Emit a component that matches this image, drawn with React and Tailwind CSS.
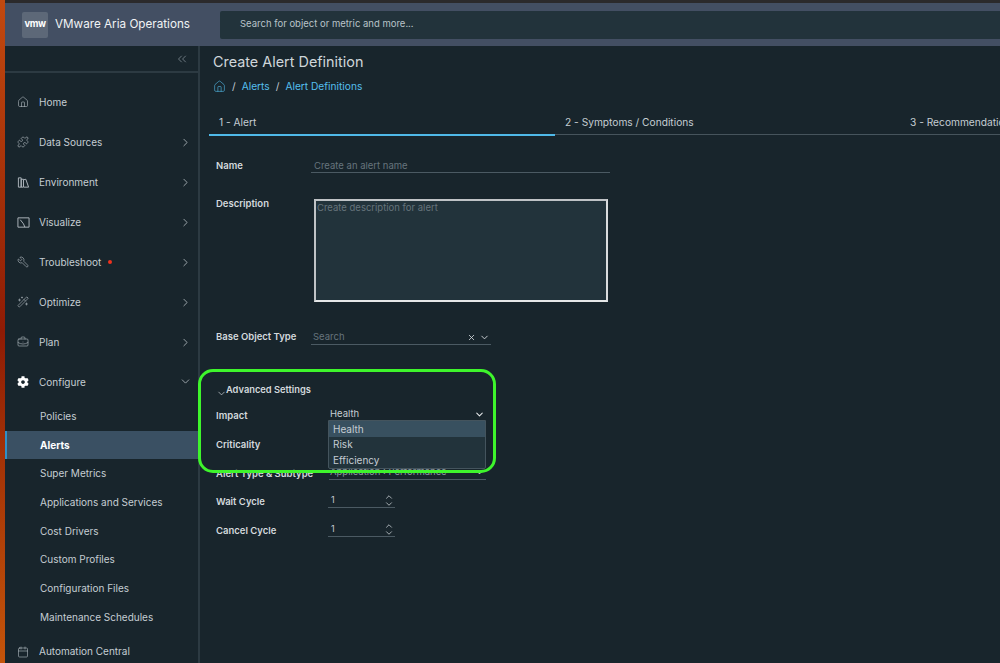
import React from 'react';
import { House, Puzzle, Wrench, WandSparkles, BriefcaseBusiness, Calendar, ChevronRight, ChevronDown, ChevronsLeft, ChevronUp, X } from 'lucide-react';
import { FaCog } from 'react-icons/fa';

const Books = () => (
  <svg width="13" height="13" viewBox="0 0 14 14" fill="none" stroke="currentColor" strokeWidth="1">
    <path d="M1.5 2h3v10h-3zM4.500 3.500h2.500v8.500h-2.500zM7.500 4l2-.5 3 8.500-5 0" />
  </svg>
);

const Chart = () => (
  <svg width="13" height="13" viewBox="0 0 14 14" fill="none" stroke="currentColor" strokeWidth="1">
    <path d="M1 2h12v10H1zM3.500 4l3.500 4.500 1.500 3.500" />
  </svg>
);

const navTop = [
  { label: 'Home', icon: <House size={12} strokeWidth={1.2} /> },
  { label: 'Data Sources', icon: <Puzzle size={12} strokeWidth={1.2} />, arrow: true },
  { label: 'Environment', icon: <Books />, arrow: true },
  { label: 'Visualize', icon: <Chart />, arrow: true },
  { label: 'Troubleshoot', icon: <Wrench size={12} strokeWidth={1.2} className="-scale-x-100" />, arrow: true, dot: true },
  { label: 'Optimize', icon: <WandSparkles size={12} strokeWidth={1.2} />, arrow: true },
  { label: 'Plan', icon: <BriefcaseBusiness size={12} strokeWidth={1.2} />, arrow: true },
];

const subItems = ['Policies', 'Alerts', 'Super Metrics', 'Applications and Services', 'Cost Drivers', 'Custom Profiles', 'Configuration Files', 'Maintenance Schedules'];

const NavRow = ({ item }) => (
  <div className="h-10 flex items-center pl-[12px] pr-[6px] text-[10px] text-[#c5cdd3]">
    <span className="w-[22px] flex justify-start text-[#b4bcc2]">{item.icon}</span>
    <span>{item.label}</span>
    {item.dot && <span className="ml-[7px] w-[4px] h-[4px] rounded-full bg-[#f0321e]"></span>}
    {item.arrow && <ChevronRight size={13} strokeWidth={1.5} className="ml-auto text-[#b4bcc2]" />}
  </div>
);

const Field = ({ label, className, children }) => (
  <div className={'flex items-center ' + className}>
    <div className="w-[112px] shrink-0 text-[9.500px] font-semibold text-[#d3d9dd]">{label}</div>
    {children}
  </div>
);

const Spinner = () => (
  <div className="-mt-[3px] w-[67px] h-[14px] border-b border-[#4b5a63] flex items-center justify-between pl-[3px] pr-[1px] text-[9px] text-[#c5cdd3]">
    <span>1</span>
    <span className="flex flex-col items-center text-[#d3d9dd] -space-y-[3px]">
      <ChevronUp size={10} strokeWidth={1.8} />
      <ChevronDown size={10} strokeWidth={1.8} />
    </span>
  </div>
);

export default function App() {
  return (
    <div className="relative w-[1000px] h-[663px] overflow-hidden flex font-['Inter',sans-serif] bg-[#18252c]">
      <div className="w-[5px] shrink-0 bg-gradient-to-b from-[#c2490f] via-[#8f1b05] to-[#c4540a]"></div>
      <div className="flex-1 min-w-0 flex flex-col">
        <div className="h-[3px] bg-[#2b2a2c]"></div>
        <header className="h-[43px] bg-[#434f63] flex items-center pl-[17px] shrink-0">
          <div className="w-[26px] h-[26px] rounded-[2px] bg-[#5d6878] flex items-center justify-center text-[9.500px] font-bold tracking-[-0.5px] text-white">vmw</div>
          <div className="ml-[7px] w-[165px] text-[11.700px] text-[#f1f3f5]">VMware Aria Operations</div>
          <div className="flex-1 h-[28px] rounded-l-[2px] bg-[#22333b] flex items-center pl-[20px] text-[9.500px] text-[#b9c3c9]">Search for object or metric and more...</div>
        </header>
        <div className="flex-1 min-h-0 flex">
          <aside className="w-[195px] shrink-0 border-r-2 border-[#2c3a42] overflow-hidden">
            <div className="h-[27px] border-b-2 border-[#2c3a42] flex justify-end items-center pr-[9px] text-[#8f9ba3]">
              <ChevronsLeft size={14} strokeWidth={1.2} />
            </div>
            <div className="pt-[9px]">
              {navTop.map((item) => (
                <NavRow key={item.label} item={item} />
              ))}
              <NavRow item={{ label: 'Configure', icon: <FaCog size={12} className="text-white" /> }} />
            </div>
            <div className="relative">
              <ChevronDown size={13} strokeWidth={1.5} className="absolute right-[6px] -top-[27px] text-[#b4bcc2]" />
              {subItems.map((label) => (
                <div
                  key={label}
                  className={
                    label === 'Alerts'
                      ? 'h-[28.700px] flex items-center pl-[35px] text-[10px] font-bold text-white bg-[#3a5063] border-l-[2px] border-[#2f8fc7]'
                      : 'h-[28.700px] flex items-center pl-[35px] text-[10px] text-[#c5cdd3]'
                  }
                >
                  <span className={label === 'Alerts' ? '-ml-[2px]' : ''}>{label}</span>
                </div>
              ))}
            </div>
            <NavRow item={{ label: 'Automation Central', icon: <Calendar size={12} strokeWidth={1.2} /> }} />
          </aside>
          <main className="flex-1 min-w-0 overflow-hidden pl-[9px]">
            <h1 className="mt-[7px] ml-[4px] text-[14.400px] leading-[18px] text-[#cfd6da]">Create Alert Definition</h1>
            <div className="mt-[8px] ml-[4px] flex items-center gap-[6px] text-[10.200px] leading-[14px] text-[#55bfee]">
              <House size={13} strokeWidth={1.1} />
              <span className="text-[#c5cdd3]">/</span>
              <span>Alerts</span>
              <span className="text-[#c5cdd3]">/</span>
              <span>Alert Definitions</span>
            </div>
            <div className="mt-[20px] flex h-[22px] border-b border-[#46545c] text-[10.200px] text-[#c5cdd3]">
              <div className="w-[346px] shrink-0 pl-[10px] pt-[2px] h-[23px] border-b-2 border-[#4fb9e8]">1 - Alert</div>
              <div className="w-[345px] shrink-0 pl-[10px] pt-[2px]">2 - Symptoms / Conditions</div>
              <div className="shrink-0 whitespace-nowrap pl-[10px] pt-[2px]">3 - Recommendations</div>
            </div>
            <div className="pl-[7px]">
              <Field label="Name" className="mt-[23px] h-[16px]">
                <div className="-ml-[17px] w-[299px] h-[13px] border-b border-[#4b5a63] pl-[3px] text-[9.500px] leading-[12px] text-[#66747c]">Create an alert name</div>
              </Field>
              <div className="mt-[25px] flex">
                <div className="w-[98px] shrink-0 -mt-[2px] text-[9.500px] font-semibold text-[#d3d9dd]">Description</div>
                <div className="w-[294px] h-[103px] bg-[#22333b] border-2 border-t-[#bfc3c6] border-l-[#bfc3c6] border-r-[#d9dcde] border-b-[#e5e7e8] pl-[1px] text-[9.500px] leading-[14px] text-[#66747c]">Create description for alert</div>
              </div>
              <Field label="Base Object Type" className="mt-[27px] h-[16px]">
                <div className="mt-[2px] -ml-[17px] w-[180px] h-[13px] border-b border-[#4b5a63] flex items-center pl-[2px] pr-[1px] text-[9.500px] text-[#66747c]">
                  <span>Search</span>
                  <X size={9} strokeWidth={2.2} className="ml-auto text-[#d3d9dd]" />
                  <ChevronDown size={11} strokeWidth={2} className="ml-[3px] text-[#d3d9dd]" />
                </div>
              </Field>
              <div className="mt-[38px] h-[14px] flex items-center text-[9.300px] font-semibold text-[#d3d9dd]">
                <ChevronDown size={11} strokeWidth={1.5} className="mt-[7px] -mr-[1px]" />
                Advanced Settings
              </div>
              <div className="relative">
                <Field label="Impact" className="mt-[11px] h-[16px]">
                  <div className="-mt-[3px] ml-[1px] w-[157px] h-[14px] border-b border-[#4fb9e8] flex items-center pl-[1px] pr-[1px] text-[9.500px] text-[#c5cdd3]">
                    <span>Health</span>
                    <ChevronDown size={11} strokeWidth={2.2} className="ml-auto text-[#e8ebed]" />
                  </div>
                </Field>
                <Field label="Criticality" className="mt-[13px] h-[16px]"><span></span></Field>
                <Field label="Alert Type &amp; Subtype" className="mt-[13px] h-[16px]">
                  <div className="-mt-[3px] ml-[1px] w-[157px] h-[14px] border-b border-[#4b5a63] flex items-center pl-[1px] pr-[1px] text-[9.500px] text-[#8d99a0]">
                    <span>Application : Performance</span>
                    <ChevronDown size={11} strokeWidth={2} className="ml-auto text-[#e8ebed]" />
                  </div>
                </Field>
                <Field label="Wait Cycle" className="mt-[12px] h-[16px]"><Spinner /></Field>
                <Field label="Cancel Cycle" className="mt-[13px] h-[16px]"><Spinner /></Field>
                <div className="absolute left-[112px] top-[12px] w-[158px] h-[49px] bg-[#22333b] border border-[#44545d] rounded-b-[2px] text-[10px] text-[#c5cdd3]">
                  <div className="h-[16px] flex items-center pl-[4px] bg-[#38505f]">Health</div>
                  <div className="h-[15.500px] flex items-center pl-[4px]">Risk</div>
                  <div className="h-[15.500px] flex items-center pl-[4px]">Efficiency</div>
                </div>
              </div>
            </div>
          </main>
        </div>
      </div>
      {/* green annotation over the screenshot */}
      <div className="absolute left-[198px] top-[369px] w-[298px] h-[104px] rounded-[15px] border-[3px] border-[#3ef52c]"></div>
    </div>
  );
}
